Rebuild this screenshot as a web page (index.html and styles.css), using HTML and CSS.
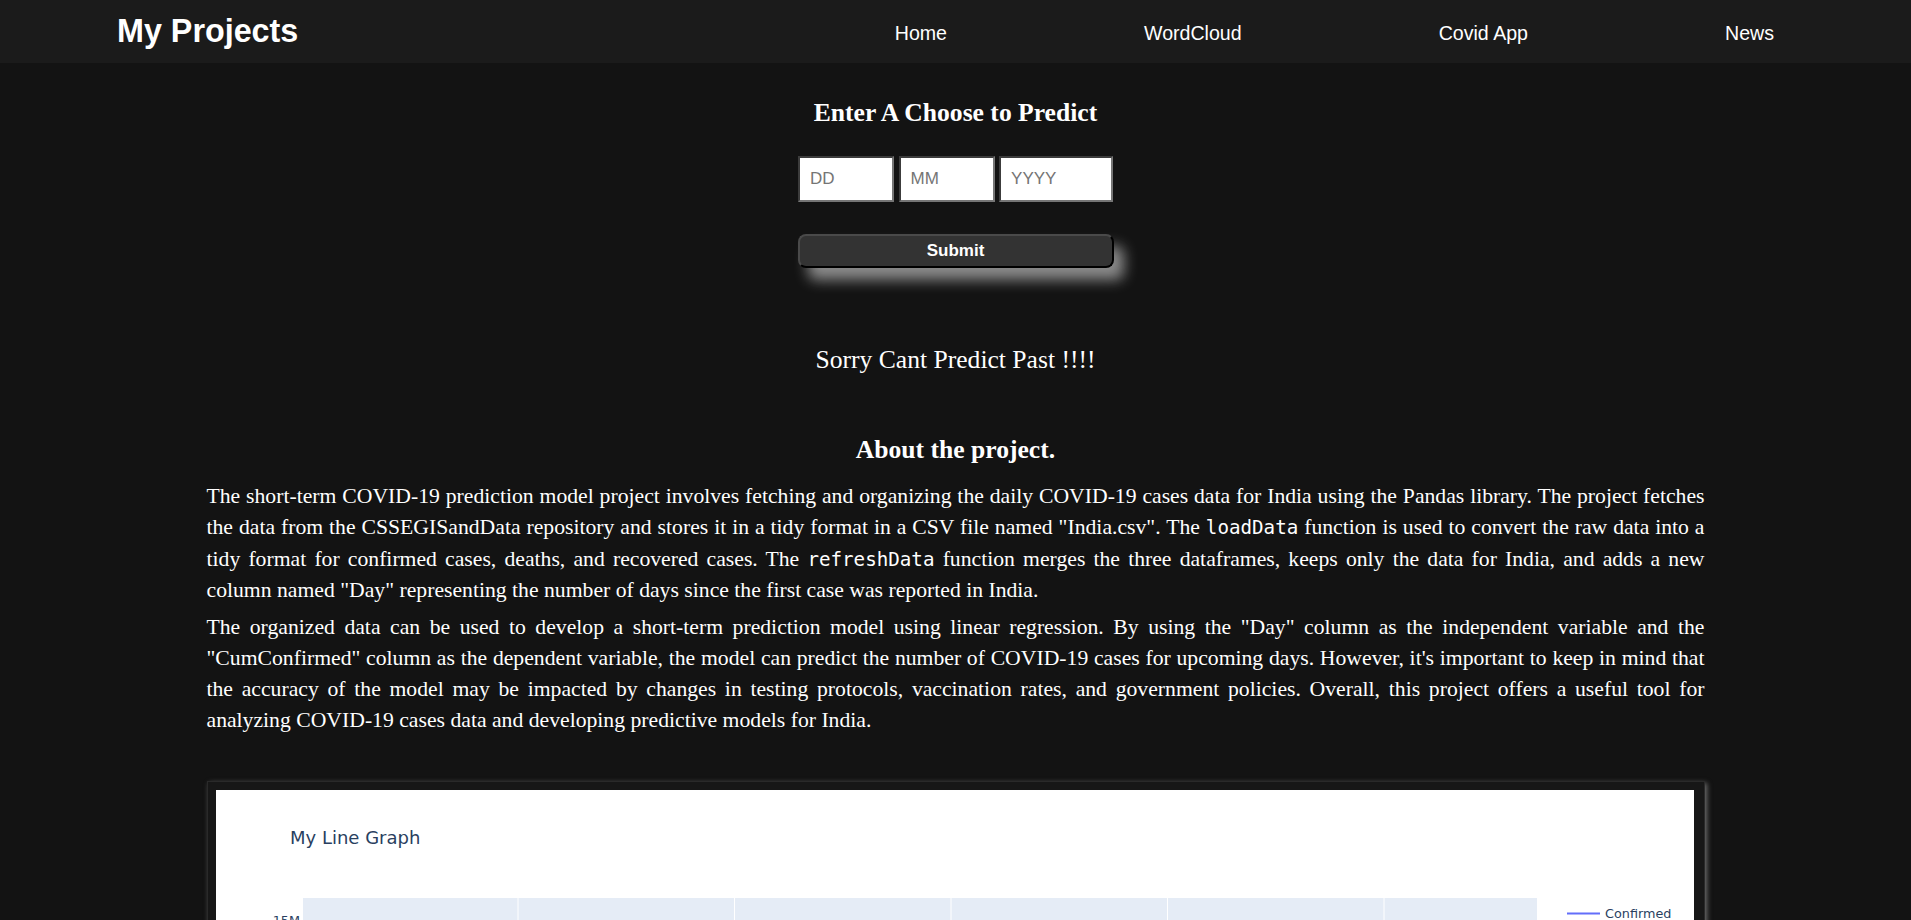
FILE: index.html
```html
<!DOCTYPE html>
<html lang="en">
<head>
<meta charset="utf-8">
<title>Covid Prediction</title>
<link rel="stylesheet" href="styles.css">
</head>
<body>
<header class="navbar">
  <h1 class="logo">My Projects</h1>
  <nav>
    <ul class="nav-links">
      <li><a href="#">Home</a></li>
      <li><a href="#">WordCloud</a></li>
      <li><a href="#">Covid App</a></li>
      <li><a href="#">News</a></li>
    </ul>
  </nav>
</header>
<main class="content">
  <h2 class="form-title">Enter A Choose to Predict</h2>
  <form class="date-form">
    <div class="date-inputs">
      <input class="date-field" type="text" placeholder="DD">
      <input class="date-field" type="text" placeholder="MM">
      <input class="date-field date-field--year" type="text" placeholder="YYYY">
    </div>
    <button class="submit-btn" type="button">Submit</button>
  </form>
  <p class="result">Sorry Cant Predict Past !!!!</p>
  <h2 class="about-title">About the project.</h2>
  <section class="about">
    <p>The short-term COVID-19 prediction model project involves fetching and organizing the daily COVID-19 cases data for India using the Pandas library. The project fetches the data from the CSSEGISandData repository and stores it in a tidy format in a CSV file named "India.csv". The <code>loadData</code> function is used to convert the raw data into a tidy format for confirmed cases, deaths, and recovered cases. The <code>refreshData</code> function merges the three dataframes, keeps only the data for India, and adds a new column named "Day" representing the number of days since the first case was reported in India.</p>
    <p>The organized data can be used to develop a short-term prediction model using linear regression. By using the "Day" column as the independent variable and the "CumConfirmed" column as the dependent variable, the model can predict the number of COVID-19 cases for upcoming days. However, it's important to keep in mind that the accuracy of the model may be impacted by changes in testing protocols, vaccination rates, and government policies. Overall, this project offers a useful tool for analyzing COVID-19 cases data and developing predictive models for India.</p>
  </section>
  <div class="graph-card">
    <div class="graph">
      <svg class="chart" width="1478" height="450" viewBox="0 0 1478 450">
        <text class="chart-title" x="74" y="54">My Line Graph</text>
        <rect x="87" y="108" width="1234" height="262" fill="#e5ecf6"/>
        <g stroke="#ffffff" stroke-width="1">
          <line x1="302" y1="108" x2="302" y2="370"/>
          <line x1="518.5" y1="108" x2="518.5" y2="370"/>
          <line x1="735" y1="108" x2="735" y2="370"/>
          <line x1="951.5" y1="108" x2="951.5" y2="370"/>
          <line x1="1168" y1="108" x2="1168" y2="370"/>
          <line x1="87" y1="131" x2="1321" y2="131"/>
          <line x1="87" y1="210" x2="1321" y2="210"/>
          <line x1="87" y1="290" x2="1321" y2="290"/>
        </g>
        <polyline fill="none" stroke="#636efa" stroke-width="2" points="87,368 300,366 520,358 735,340 950,300 1168,240 1321,180"/>
        <text class="chart-tick" x="84" y="135" text-anchor="end">15M</text>
        <text class="chart-tick" x="84" y="214" text-anchor="end">10M</text>
        <text class="chart-tick" x="84" y="294" text-anchor="end">5M</text>
        <line x1="1351" y1="123.5" x2="1384" y2="123.5" stroke="#636efa" stroke-width="2"/>
        <text class="chart-legend" x="1389" y="128">Confirmed</text>
      </svg>
    </div>
  </div>
</main>
</body>
</html>
```
FILE: styles.css
```css
html {
  scrollbar-width: none;
}

body {
  margin: 0;
  background: #131313;
  color: #ffffff;
  font-family: "Liberation Serif", "Times New Roman", serif;
}

.navbar {
  box-sizing: border-box;
  height: 63px;
  background: #1b1b1b;
  display: flex;
  align-items: center;
  justify-content: space-between;
  padding: 0 137px 0 117px;
}

.logo {
  margin: 0;
  font: bold 32.3px/37px "Liberation Sans", Arial, sans-serif;
  color: #ffffff;
}

.nav-links {
  list-style: none;
  margin: 0;
  padding: 2px 0 0;
  display: flex;
  gap: 197px;
}

.nav-links a {
  color: #ffffff;
  text-decoration: none;
  font: 19.6px/22px "Liberation Sans", Arial, sans-serif;
}

.form-title {
  margin: 35px 0 0;
  text-align: center;
  font: bold 25.6px/30px "Liberation Serif", "Times New Roman", serif;
}

.date-form {
  margin: 28px 0 0;
  display: flex;
  flex-direction: column;
  align-items: center;
}

.date-inputs {
  display: flex;
  gap: 4.6px;
}

.date-field {
  box-sizing: border-box;
  width: 96px;
  height: 46px;
  margin: 0;
  padding: 0 10px;
  border: 2px solid;
  border-color: #3c3c3c #767676 #767676 #3c3c3c;
  border-radius: 0;
  background: #ffffff;
  color: #000000;
  font: 17px "Liberation Sans", Arial, sans-serif;
}

.date-field--year {
  width: 114px;
}

.date-field::placeholder {
  color: #757575;
}

.submit-btn {
  box-sizing: border-box;
  margin-top: 32px;
  width: 316px;
  height: 34px;
  padding: 0;
  background: #333333;
  color: #ffffff;
  border: 2px solid;
  border-color: #4a4a4a #000000 #000000 #4a4a4a;
  border-radius: 8px;
  font: bold 17px "Liberation Sans", Arial, sans-serif;
  box-shadow: 10px 12px 14px rgba(190, 190, 190, 0.7);
}

.result {
  margin: 77px 0 0;
  text-align: center;
  font: 25.6px/30px "Liberation Serif", "Times New Roman", serif;
}

.about-title {
  margin: 60px 0 0;
  text-align: center;
  font: bold 25.6px/30px "Liberation Serif", "Times New Roman", serif;
}

.about {
  width: 1498px;
  margin: 16px auto 0;
  text-align: justify;
  font-size: 21.7px;
  line-height: 30.8px;
}

.about p {
  margin: 0;
}

.about p + p {
  margin-top: 6px;
}

.about code {
  font-family: "DejaVu Sans Mono", monospace;
  font-size: 19.2px;
}

.graph-card {
  box-sizing: border-box;
  width: 1498px;
  margin: 46px auto 0;
  padding: 8px 10px 8px 8px;
  background: #171717;
  border: 1px solid #2a2a2a;
  box-shadow: 2px 2px 5px rgba(170, 170, 170, 0.6);
}

.graph {
  background: #ffffff;
  height: 450px;
}

.chart {
  display: block;
}

.chart-title {
  font-family: "DejaVu Sans", Verdana, sans-serif;
  font-size: 18px;
  fill: #2a3f5f;
}

.chart-tick,
.chart-legend {
  font-family: "DejaVu Sans", Verdana, sans-serif;
  font-size: 12.8px;
  fill: #2a3f5f;
}
```
